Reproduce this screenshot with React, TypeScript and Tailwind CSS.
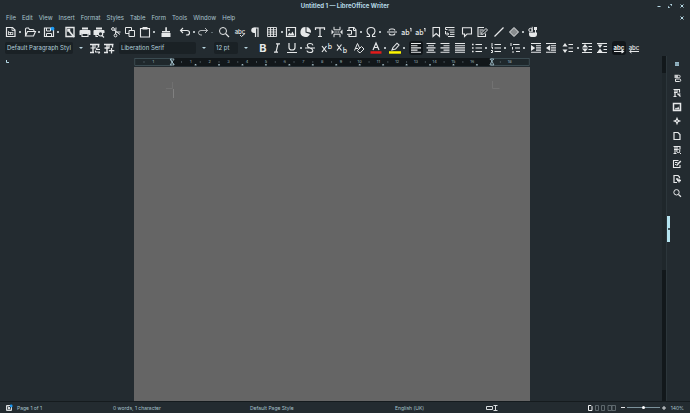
import React from "react";

type Kids = { children: React.ReactNode };

function Svg({ children }: Kids) {
  return (
    <svg viewBox="0 0 14 14" width="14" height="14" fill="none" stroke="currentColor" strokeWidth="1" aria-hidden="true" className="block shrink-0">
      {children}
    </svg>
  );
}

function Glyph({ x = 7, y, size, bold, children }: { x?: number; y: number; size: number; bold?: boolean; children: string }) {
  return (
    <text x={x} y={y} fontSize={size} fontWeight={bold ? 700 : 500} textAnchor="middle" fill="currentColor" stroke="none">
      {children}
    </text>
  );
}

const solid = { fill: "currentColor", stroke: "none" };

const icons: Record<string, React.ReactNode> = {
  "New": <><path d="M2.500 2.500h6L11 5v6.500H2.500z" strokeWidth="1.200" /><path d="M8 2.500v3h3M4.500 6v4M4.500 7.500h4M6.500 7v3M8.800 7v3M4.500 9.500h4.500" strokeWidth=".8" /></>,
  "Open": <path d="M2.500 11V4q0-1 1-1h2l1 1.500h3.500q1 0 1 1V6.500M2.500 11l2-4.500h8l-2 4.500z" strokeWidth="1.100" />,
  "Save": <><path d="M2.500 3h7L11.500 5v6.500h-9z" strokeWidth="1.200" /><path d="M4.500 3v3h4V3M4.500 11.500V8.500h5v3" /><circle cx="10.500" cy="3.700" r="1.900" fill="#1d99f3" stroke="none" /></>,
  "Edit Mode": <><path d="M3 2.500h8v9H3z" strokeWidth="1.400" /><path d="M4.200 3.700h3v3h-3z" {...solid} /><path d="M6 6l5 6" strokeWidth="1.800" /></>,
  "Print": <><path d="M4 2.500h6v2H4zM2.500 5h9q1 0 1 1v4h-2V8.500h-7V10h-2V6q0-1 1-1z" {...solid} /><path d="M4 8.500h6v3H4z" strokeWidth="1.100" /></>,
  "Print Preview": <><path d="M4 2.500h6v2H4zM2.500 5h9q1 0 1 1v2H6v2H1.500V6q0-1 1-1z" {...solid} /><circle cx="8.500" cy="8.800" r="2.200" fill="#232b30" strokeWidth="1.200" /><path d="M10 10.500l2 2M4 9v2.500h2" strokeWidth="1.100" /></>,
  "Cut": <><circle cx="4" cy="4" r="1.400" /><circle cx="6.500" cy="10.500" r="1.400" /><path d="M5 5l6 4.500M6.500 9L7 2.500M6 7h5.500" /></>,
  "Copy": <><path d="M2.500 2.500h6v6h-6z" /><path d="M6 5.500h5.500v6H6z" fill="#232b30" /></>,
  "Paste": <><path d="M2.500 3.500h9v8.500h-9z" strokeWidth="1.100" /><path d="M4.500 2h5v2.500h-5z" {...solid} /></>,
  "Clone": <path d="M6.300 2.500q.8-1 1.600 0V6H11v1.500H3V6h3.300zM2.500 8h9v4h-9z" {...solid} />,
  "Undo": <path d="M5 3L2.500 5.500 5 8M2.500 5.500H9q2.500 0 2.500 2.200Q11.500 10 9 10H8" strokeWidth="1.100" />,
  "Redo": <path d="M9 3l2.500 2.500L9 8M11.500 5.500H5q-2.500 0-2.500 2.200Q2.500 10 5 10h1" opacity=".75" />,
  "Find": <><circle cx="6" cy="6" r="3.500" /><path d="M8.600 8.600l3.400 3.400" strokeWidth="1.200" /></>,
  "Spelling": <><Glyph y={8.500} size={6}>abc</Glyph><path d="M7 10l1.500 1.500L12 8.500" /></>,
  "Formatting Marks": <><path d="M7.500 2.500H6a2.700 2.700 0 0 0 0 5.400h1.500z" {...solid} /><path d="M7.500 2.500V12M10 12V3H6.500" strokeWidth="1.200" /></>,
  "Table": <path d="M2.500 2.500h9v9h-9zM2.500 4.800h9M2.500 7h9M2.500 9.200h9M5.500 2.500v9M8.500 2.500v9" strokeWidth=".9" />,
  "Image": <><path d="M2.500 2.500h9v9h-9z" strokeWidth="1.200" /><path d="M3.500 10.500l2-3 1.500 1.500 1.500-2.500 2 4z" {...solid} /><circle cx="5" cy="5" r=".9" {...solid} /></>,
  "Chart": <><path d="M6.500 2A5 5 0 1 0 11 9L6.500 7.500z" {...solid} /><path d="M7.500 2v4.800l4.500 1A5 5 0 0 0 7.500 2z" {...solid} /></>,
  "Text Box": <path d="M2.500 5V2.800h9V5M7 3v8.500M5 11.500h4" strokeWidth="1.200" />,
  "Page Break": <><path d="M4 1.800v3h6v-3M4 12.200v-3h6v3" /><path d="M1.500 4.500v5L4 7zM12.500 4.500v5L10 7z" {...solid} /><path d="M4.500 7h5" strokeDasharray="1.200 .6" /></>,
  "Field": <><path d="M4 5V2.500H9L11 5v6.500H4V10" strokeWidth="1.100" /><path d="M2 5.500h4.500v3.800H2" /><path d="M8.500 2.500v3h2.500" /></>,
  "Special Character": <path d="M2.500 11.500H5.500V10Q3 8.500 3 6.200 3.200 2.500 7 2.500t4 3.700Q11 8.500 8.500 10v1.500h3" strokeWidth="1.100" />,
  "Hyperlink": <path d="M2 7h10M4 5.500Q4.500 4 6 4h2q1.500 0 2 1.500M4 8.500Q4.500 10 6 10h2q1.500 0 2-1.500" strokeWidth="1.100" />,
  "Footnote": <><Glyph x={5.500} y={10} size={7}>ab</Glyph><path d="M11 6.500V3L10 3.700" /></>,
  "Endnote": <><Glyph x={5.500} y={10} size={7}>ab</Glyph><path d="M11 6.500V3M10 3.500h1" /></>,
  "Bookmark": <path d="M4 2.500h6.500v9L7.200 8.500 4 11.500z" strokeWidth="1.100" />,
  "Cross-reference": <path d="M2.500 4.500V2.500h9M2.500 4.500h2M5.500 5h6M7 7.200h4.500M7 9.400h4.500M5 11.500h6.500M2.500 6v3h3M4.200 7.500L5.700 9 4.200 10.500" />,
  "Comment": <path d="M2.500 2.800h9V9H7l-2.500 2.500V9h-2z" strokeWidth="1.100" />,
  "Track Changes": <><path d="M9 2.500H3v9h7.500V8.500" strokeWidth="1.100" /><path d="M4.500 5h4M4.500 7h2M4.500 9h1.500" /><path d="M6.500 9.500l.5-2L11 3.500 12.500 5l-4 4z" /></>,
  "Line": <path d="M2.500 11.500l9-9" strokeWidth="1.200" />,
  "Shapes": <path d="M7 2.500L11.500 7 7 11.500 2.500 7z" fill="#888c8e" />,
  "Draw Functions": <><circle cx="4.500" cy="5" r="1.700" /><path d="M6.200 1.800V7" /><path d="M8 2h3v3H8zM3 7.500h8V9q0 3-2.500 3h-3Q3 12 3 9zM9 5h1v3H9z" {...solid} /></>,
  "Update Style": <><path d="M2 3.500h9.500M5 3v8M2 11.500h4M10.500 3.500v3" strokeWidth="1.400" /><path d="M7 4v3H2.500M12 8.500H8M8 8.500l1.500-2M8 11h4M12 11l-1.500 1.500M7.500 9.500v2" strokeWidth="1.100" /></>,
  "New Style": <><path d="M2 3.500h9.500M5 3v8M2 11.500h4M10.500 3.500v3" strokeWidth="1.400" /><path d="M7 4v3H2.500M9.500 7v5.500M6.800 9.700h5.500" strokeWidth="1.300" /></>,
  "Bold": <Glyph y={11} size={11} bold>B</Glyph>,
  "Italic": <path d="M6 2.800h4M4 11.200h4M8 2.800l-2 8.400" strokeWidth="1.200" />,
  "Underline": <path d="M4 2v4.500q0 2.500 3 2.500t3-2.500V2M2 11.500h10" strokeWidth="1.200" />,
  "Strikethrough": <path d="M10 4.300Q9.500 2.500 7 2.500 4.300 2.500 4.300 4.500 4.300 6 7 7t2.900 2.500q0 2-2.900 2-2.700 0-3.200-1.800M2 7h10" strokeWidth="1.100" />,
  "Superscript": <><path d="M2 5l4.500 6M6.500 5L2 11" strokeWidth="1.200" /><Glyph x={9.800} y={8.200} size={7}>b</Glyph></>,
  "Subscript": <><path d="M2 3.500L6.500 9.500M6.500 3.500L2 9.500" strokeWidth="1.200" /><Glyph x={9.800} y={12} size={7}>b</Glyph></>,
  "Clear Formatting": <><path d="M2.500 9.500l3-7 2 4.500M3.500 7.500h2.500" /><path d="M5.500 9.500l4-4 2.500 2.500-3.500 3.500h-1.500z" /></>,
  "Font Color": <><path d="M4 9l3-7 3 7M5 6.500h4" strokeWidth="1.200" /><path d="M1.500 10.200h11v2.500h-11z" fill="#e31b1b" stroke="none" /></>,
  "Highlighting": <><path d="M4 9L5 6.500 9 2.200 11 4 7.500 8z" strokeWidth="1.100" /><path d="M1 10.200h12v2.500H1z" fill="#fdf500" stroke="none" /></>,
  "Align Left": <path d="M2 2.500h10M2 4.700h6.500M2 6.900h10M2 9.100h6.500M2 11.300h10" strokeWidth="1.100" />,
  "Align Center": <path d="M2.500 2.500h9M4 4.700h6M2.500 6.900h9M4 9.100h6M2.500 11.300h9" strokeWidth="1.100" />,
  "Align Right": <path d="M2.500 2.500h9M5.500 4.700h6M2.500 6.900h9M5.500 9.100h6M2.500 11.300h9" strokeWidth="1.100" />,
  "Justify": <path d="M2 2.500h10M2 4.700h10M2 6.900h10M2 9.100h10M2 11.300h10" strokeWidth="1.100" />,
  "Bullets": <><path d="M5.500 3.500H12M5.500 7H12M5.500 10.500H12" /><path d="M2 2.800h1.600v1.500H2zM2 6.200h1.600v1.500H2zM2 9.700h1.600v1.500H2z" {...solid} /></>,
  "Numbering": <path d="M5.500 3.500H12M5.500 7H12M5.500 10.500H12M3 2v3M2 6h1.500v2M2 9.500h1.500v2H2" />,
  "Outline": <path d="M5 3.500h6.500M7 7h5M8 10.500h4M3 2v3M4.500 6v2.500M5 10v2" />,
  "Increase Indent": <><path d="M2 2.500h10M7 4.700h5M7 6.900h5M7 9.100h5M2 11.300h10" strokeWidth="1.100" /><path d="M2 4L6.200 7 2 10z" {...solid} /></>,
  "Decrease Indent": <><path d="M2 2.500h10M7 4.700h5M7 6.900h5M7 9.100h5M2 11.300h10" strokeWidth="1.100" /><path d="M6.200 4L2 7l4.200 3z" {...solid} /></>,
  "Line Spacing": <><path d="M7.500 3.500H12M7.500 7H12M7.500 10.500H12" /><path d="M1.500 5.500L4 2l2.500 3.500zM1.500 8.500L4 12l2.500-3.500z" {...solid} /></>,
  "Increase Paragraph Spacing": <><path d="M2 2.500h10M8.500 5.500H12M8.500 8.500H12M2 11.500h10" strokeWidth="1.100" /><path d="M2 6.500l3-3.500 3 3.500zM2 7.500L5 11l3-3.500z" {...solid} /></>,
  "Decrease Paragraph Spacing": <><path d="M2 2.500h10M8.500 5.500H12M8.500 8.500H12M2 11.500h10" strokeWidth="1.100" /><path d="M2.500 3.500h5L5 7zM2.500 11L5 7.500 7.500 11z" {...solid} /></>,
  "Left-to-right": <><Glyph y={8.500} size={6} bold>abc</Glyph><path d="M2 10.500h9M9.500 9l2 1.500-2 1.500" strokeWidth="1.100" /></>,
  "Right-to-left": <><Glyph y={8.500} size={6}>abc</Glyph><path d="M12 10.500H3M4.500 9l-2 1.500 2 1.500" /></>,
  "Sidebar Settings": <><path d="M5 5h4v4H5z" fill="#7c99a5" stroke="none" /><path d="M5 5.500h4M5 7h4M5 8.500h4" stroke="#9fc3d2" strokeWidth=".7" /></>,
  "Properties": <><path d="M4.500 3.800h4.500a1.600 1.600 0 0 1 0 3.200H4.500z" {...solid} opacity=".85" /><circle cx="8.800" cy="5.400" r=".9" fill="#232b30" stroke="none" /><path d="M5.500 8h4a1.200 1.200 0 0 1 0 2.500h-4z" /></>,
  "Styles": <><path d="M3.500 3.500h6.500M5 3.500v7M3.500 10.500h3M9.500 3.500v3" strokeWidth="1.200" /><path d="M7 4v2.500H4M7 8h3.500M8 8l2.500 2.500" strokeWidth="1.200" /></>,
  "Gallery": <><path d="M3.500 3.500h7v7h-7z" strokeWidth="1.500" /><path d="M4.500 9.500l1.500-2 1 1L8.200 6.500l1.500 3z" {...solid} /></>,
  "Navigator": <><path d="M7 2.800L8.200 5.800 11.200 7 8.200 8.200 7 11.200 5.800 8.200 2.800 7 5.800 5.800z" {...solid} /><circle cx="7" cy="7" r=".8" fill="#232b30" stroke="none" /></>,
  "Page": <path d="M4 3.500h4l2 2v5H4z" strokeWidth="1.200" />,
  "Style Inspector": <><path d="M3.500 3.500h6.500v3M5 4v6.500M3.500 10.500h3M7 4v2.500H4" strokeWidth="1.100" /><circle cx="8.300" cy="8" r="1.600" /><path d="M9.500 9.500l1.500 1.500" /></>,
  "Manage Changes": <><path d="M8.500 3.500h-5v7h6.500V8M5 5.500h2.500M5 7.500h1" strokeWidth="1.100" /><path d="M6.500 8.500L10.800 4" strokeWidth="1.500" /></>,
  "Accessibility Check": <><path d="M9.500 6V5L8 3.500H4v7h3" strokeWidth="1.200" /><path d="M7 8.500h4M9 6.500v4M6 7h2" strokeWidth="1.300" /></>,
  "Search": <><circle cx="6.500" cy="6.300" r="2.700" /><path d="M8.500 8.500l2.500 2.300" strokeWidth="1.200" /></>,
};

function Tool({ name, active }: { name: string; active?: boolean }) {
  return (
    <button type="button" aria-label={name} title={name} className={active ? "h-3.5 w-3.5 shrink-0 rounded-[3px] bg-[#11161a]" : "h-3.5 w-3.5 shrink-0"}>
      <Svg>{icons[name]}</Svg>
    </button>
  );
}

function Dot({ name, dim }: { name: string; dim?: boolean }) {
  return (
    <button type="button" aria-label={name} className="flex h-3.5 w-1 shrink-0 items-center justify-center">
      <span className={dim ? "h-px w-0.5 bg-[#5d6a70]" : "h-0.5 w-0.5 bg-[#b4bbbe]"} />
    </button>
  );
}

// A name ending in "+" is followed by its drop-down button.
function Group({ items, width, active }: { items: string[]; width: string; active?: string }) {
  return (
    <div className={`flex shrink-0 items-center justify-between ${width}`}>
      {items.map((item) => {
        const name = item.replace("+", "");
        return (
          <React.Fragment key={item}>
            <Tool name={name} active={active === name} />
            {item.endsWith("+") && <Dot name={`${name} options`} dim={name === "Redo"} />}
          </React.Fragment>
        );
      })}
    </div>
  );
}

function Combo({ label, value, width }: { label: string; value: string; width: string }) {
  return (
    <div className="flex shrink-0 items-center">
      <input type="text" aria-label={label} defaultValue={value} className={`h-3 rounded-xs bg-[#1a2125] px-0.5 text-[6px] text-[#b4d0dc] outline-none ${width}`} />
      <button type="button" aria-label={`${label} list`} className="flex h-3 w-[15px] items-center justify-center">
        <svg viewBox="0 0 4 2" width="4" height="2" fill="#b9d6e0" aria-hidden="true"><path d="M0 0h4L2 2z" /></svg>
      </button>
    </div>
  );
}

const menus = ["File", "Edit", "View", "Insert", "Format", "Styles", "Table", "Form", "Tools", "Window", "Help"];

const panels = ["Sidebar Settings", "Properties", "Styles", "Gallery", "Navigator", "Page", "Style Inspector", "Manage Changes", "Accessibility Check", "Search"];

const CM = 18.83;
const numbers = Array.from({ length: 20 }, (_, i) => i - 1).filter((n) => n !== 0 && n !== 17);
const tabs = Array.from({ length: 13 }, (_, i) => 38 + (i + 1) * 1.25 * CM);

function Ruler() {
  return (
    <svg viewBox="0 0 397 8" className="block w-full" fill="none" aria-label="Horizontal ruler">
      <rect width="397" height="8" fill="#12171a" />
      <rect x=".5" y=".5" width="37" height="7" fill="#1f282c" stroke="#4b5f66" strokeWidth=".7" />
      <rect x="358.500" y=".5" width="38" height="7" fill="#1f282c" stroke="#4b5f66" strokeWidth=".7" />
      {numbers.map((n) => (
        <React.Fragment key={n}>
          <text x={38 + n * CM} y="5.200" fontSize="4" textAnchor="middle" fill="#9fb6bf">{Math.abs(n)}</text>
          <path d={`M${38 + (n - 0.5) * CM} 3v2`} stroke="#56646a" strokeWidth=".7" />
        </React.Fragment>
      ))}
      {tabs.map((x) => (
        <path key={x} d={`M${x - 1} 7h2M${x} 6v1`} stroke="#b9d6e0" strokeWidth=".8" />
      ))}
      <path d="M36 1h4l-4 6h4zM36 1l4 6" stroke="#a9c8d3" strokeWidth=".8" />
      <path d="M357 7l2-4 2 4zM357 1h4l-2 2z" stroke="#a9c8d3" strokeWidth=".8" />
    </svg>
  );
}

export default function App() {
  return (
    <div className="flex h-screen min-h-60 flex-col overflow-hidden bg-[#232b30] font-['Inter','Noto_Sans',sans-serif] text-[6px] leading-3 text-[#a9c3ce]">
      <header className="grid h-3 shrink-0 grid-cols-[1fr_auto_1fr] items-center text-[#b5d8e5]">
        <h1 className="col-start-2 font-bold">Untitled 1 — LibreOffice Writer</h1>
        <div className="flex justify-end pr-[3px]">
          <button type="button" aria-label="Minimise" className="flex h-3 w-[11px] items-center justify-center">
            <svg viewBox="0 0 4 4" width="4" height="4" stroke="currentColor"><path d="M.5 2.500h3" /></svg>
          </button>
          <button type="button" aria-label="Restore" className="flex h-3 w-3 items-center justify-center">
            <svg viewBox="0 0 4 4" width="4" height="4" fill="currentColor"><path d="M1.800 0H4v2.200zM0 1.800V4h2.200z" /></svg>
          </button>
          <button type="button" aria-label="Close" className="flex h-3 w-[11px] items-center justify-center">
            <svg viewBox="0 0 4 4" width="4" height="4" stroke="currentColor"><path d="M.5.5l3 3M3.500.5l-3 3" /></svg>
          </button>
        </div>
      </header>

      <nav aria-label="Menu bar" className="flex h-3 shrink-0 items-center gap-1.5 pr-[3px] pl-1.5">
        {menus.map((m) => (
          <button key={m} type="button">{m}</button>
        ))}
        <button type="button" aria-label="Close document" className="ml-auto flex h-3 w-[11px] items-center justify-center">
          <svg viewBox="0 0 4 4" width="4" height="4" stroke="#b5d8e5"><path d="M.5.5l3 3M3.500.5l-3 3" /></svg>
        </button>
      </nav>

      <div role="toolbar" aria-label="Standard" className="flex h-4 shrink-0 items-center gap-[3px] pl-1 text-[#e6e8e9]">
        <Group width="w-14" items={["New+", "Open+", "Save+"]} />
        <Group width="w-[43px]" items={["Edit Mode", "Print", "Print Preview"]} />
        <Group width="w-[47px]" items={["Cut", "Copy", "Paste+"]} />
        <Group width="w-4" items={["Clone"]} />
        <Group width="w-9" items={["Undo+", "Redo+"]} />
        <Group width="w-[45px]" items={["Find", "Spelling", "Formatting Marks"]} />
        <Group width="w-[62px]" items={["Table+", "Image", "Chart", "Text Box"]} />
        <Group width="w-[52px]" items={["Page Break", "Field+", "Special Character+"]} />
        <Group width="w-[72px]" items={["Hyperlink", "Footnote", "Endnote", "Bookmark", "Cross-reference"]} />
        <Group width="w-[29px]" items={["Comment", "Track Changes"]} />
        <Group width="w-12" items={["Line", "Shapes+", "Draw Functions"]} />
      </div>

      <div role="toolbar" aria-label="Formatting" className="flex h-4 shrink-0 items-center gap-[3px] pl-[5px] text-[#e6e8e9]">
        <div className="flex items-center">
          <Combo label="Paragraph style" value="Default Paragraph Style" width="w-[68px]" />
          <Group width="w-7" items={["Update Style", "New Style"]} />
        </div>
        <Combo label="Font name" value="Liberation Serif" width="w-[77px]" />
        <Combo label="Font size" value="12 pt" width="w-6" />
        <Group width="w-[61px]" items={["Bold", "Italic", "Underline+", "Strikethrough"]} />
        <Group width="w-[29px]" items={["Superscript", "Subscript"]} />
        <Group width="w-3.5" items={["Clear Formatting"]} />
        <Group width="w-[37px]" items={["Font Color+", "Highlighting+"]} />
        <Group width="w-[58px]" items={["Align Left", "Align Center", "Align Right", "Justify"]} active="Align Left" />
        <Group width="w-14" items={["Bullets+", "Numbering+", "Outline+"]} />
        <Group width="w-[29px]" items={["Increase Indent", "Decrease Indent"]} />
        <Group width="w-12" items={["Line Spacing+", "Increase Paragraph Spacing", "Decrease Paragraph Spacing"]} />
        <Group width="w-[29px]" items={["Left-to-right", "Right-to-left"]} active="Left-to-right" />
      </div>

      <div className="flex min-h-0 flex-1">
        <main className="relative flex min-w-0 flex-1 flex-col items-center pt-0.5 pl-0.5">
          <svg viewBox="0 0 4 4" width="4" height="4" stroke="#b5d8e5" fill="none" aria-hidden="true" className="absolute top-1 left-1.5">
            <path d="M.5 0v2.500H3" />
          </svg>
          <div className="flex min-h-0 w-3/5 flex-1 flex-col gap-px">
            <Ruler />
            <div className="flex min-h-0 flex-1 items-start justify-between bg-[#656565] pt-3.5 pr-7 pl-8">
              <svg viewBox="0 0 10 18" width="10" height="18" fill="none" aria-hidden="true">
                <path d="M0 7.500h6.500V1" stroke="#707070" />
                <path d="M7.500 8v9" stroke="#808080" />
              </svg>
              <svg viewBox="0 0 10 9" width="10" height="9" fill="none" aria-hidden="true">
                <path d="M.5 0v7.500h7" stroke="#727272" />
              </svg>
            </div>
          </div>
        </main>
        <div className="flex w-1 shrink-0 flex-col bg-[#12181b] pt-px">
          <div className="h-4" />
          <div className="h-[197px] bg-[#1f272b]" />
        </div>
        <div className="flex w-1 shrink-0 flex-col border-l border-[#2c363b] pt-40">
          <button type="button" aria-label="Hide sidebar" className="flex h-[26px] w-[3px] items-center justify-center bg-[#b5e4f0]">
            <span className="h-0.5 w-0.5 bg-[#3d5159]" />
          </button>
        </div>
        <aside aria-label="Sidebar" className="flex w-5 shrink-0 flex-col items-start pt-px text-[#e6e8e9]">
          <div className="flex h-[143px] flex-col justify-between">
            {panels.map((p) => <Tool key={p} name={p} />)}
          </div>
        </aside>
      </div>

      <footer className="grid h-3 shrink-0 grid-cols-[17px_96px_137px_145px_90px_1fr] items-center border-t border-[#151b1e] text-[5px] leading-[10px]">
        <svg viewBox="0 0 8 8" width="8" height="8" fill="none" stroke="#d8dcde" aria-label="Document modified" className="ml-[5px]">
          <path d="M1.500 1.500h5v5h-5zM3 1.500v2h2M3 6.500v-2h2v2" />
          <circle cx="6.200" cy="2" r="1.400" fill="#1d99f3" stroke="none" />
        </svg>
        <span>Page 1 of 1</span>
        <span>0 words, 1 character</span>
        <span>Default Page Style</span>
        <span>English (UK)</span>
        <div className="flex items-center text-[#d8dcde]">
          <svg viewBox="0 0 13 8" width="13" height="8" fill="none" stroke="currentColor" aria-label="Selection mode">
            <path d="M1.500 2.500h6v3h-6zM8.500 1.500h4M10.500 1.500v5M8.500 6.500h4" />
          </svg>
          <svg viewBox="0 0 30 8" width="30" height="8" fill="none" stroke="#6d797e" aria-label="View layout" className="ml-auto">
            <path d="M1.500 1.500h2.500l1 1v4H1.500z" stroke="#f2f4f5" />
            <path d="M8.500 1.500h3v5h-3zM14.500 1.500h3v5h-3zM21 1.500h3.500v5H21zM25 1.500h3.500v5H25z" strokeWidth=".8" />
          </svg>
          <button type="button" aria-label="Zoom out" className="ml-1 flex h-2 w-1 items-center">
            <span className="h-px w-full bg-[#e6e8e9]" />
          </button>
          <input
            type="range"
            aria-label="Zoom"
            defaultValue={52}
            className="mx-0.5 h-2 w-[33px] appearance-none bg-transparent [&::-webkit-slider-runnable-track]:h-px [&::-webkit-slider-runnable-track]:bg-[#7c929b] [&::-webkit-slider-thumb]:-mt-[1px] [&::-webkit-slider-thumb]:h-[3px] [&::-webkit-slider-thumb]:w-[3px] [&::-webkit-slider-thumb]:appearance-none [&::-webkit-slider-thumb]:rounded-full [&::-webkit-slider-thumb]:bg-white"
          />
          <button type="button" aria-label="Zoom in" className="flex h-2 w-1 items-center">
            <svg viewBox="0 0 4 4" width="4" height="4" stroke="currentColor"><path d="M0 2h4M2 0v4" /></svg>
          </button>
          <span className="pr-1.5 pl-[5px] text-[#a9c3ce]">140%</span>
        </div>
      </footer>
    </div>
  );
}
